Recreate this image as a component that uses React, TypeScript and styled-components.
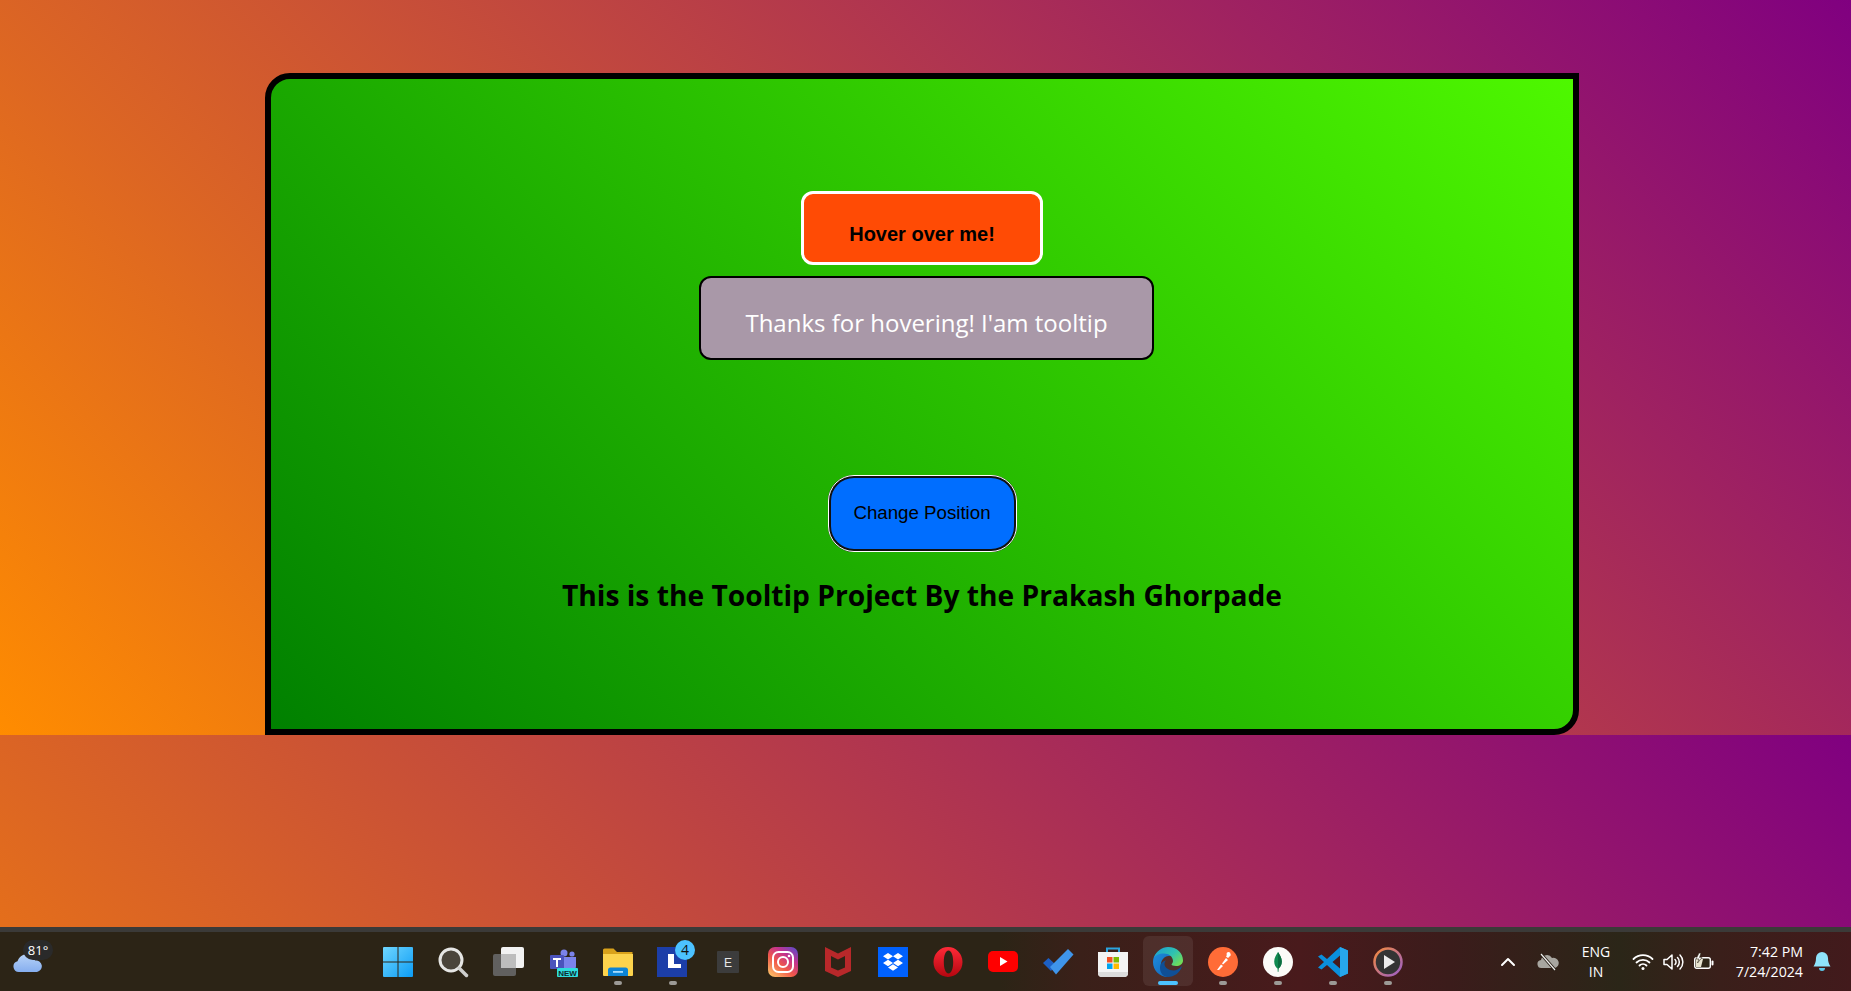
import styled, { createGlobalStyle } from 'styled-components';

const GlobalStyle = createGlobalStyle`
  html,
  body {
    margin: 0;
    height: 991px;
    overflow: hidden;
  }

  body {
    font-family: 'Open Sans', 'Liberation Sans', sans-serif;
    background: linear-gradient(45deg, #ff8c00, #800080) 0 0 / 100% 735px repeat;
  }
`;

const Page = styled.div`
  height: 991px;
  display: flex;
  flex-direction: column;
`;

const Stage = styled.main`
  height: 735px;
  box-sizing: border-box;
  padding: 73px 0 0 265px;
`;

const Card = styled.section`
  width: 1314px;
  height: 662px;
  box-sizing: border-box;
  padding-top: 112px;
  border: 6px solid #000;
  border-radius: 25px 0 25px 0;
  background: linear-gradient(45deg, #008000, #4ef800);
  display: flex;
  flex-direction: column;
  align-items: center;
`;

const HoverButton = styled.button`
  width: 242px;
  height: 74px;
  box-sizing: border-box;
  padding: 13px 0 0;
  border: 3px solid #fff;
  border-radius: 12px;
  background: #ff4b05;
  color: #000;
  font-family: 'Liberation Sans', sans-serif;
  font-size: 20px;
  font-weight: 700;
`;

const Tooltip = styled.div`
  width: 455px;
  height: 84px;
  box-sizing: border-box;
  margin: 11px 0 0 9px;
  padding-top: 9px;
  border: 2px solid #000;
  border-radius: 12px;
  background: #a998a8;
  color: #fff;
  font-size: 24px;
  display: flex;
  align-items: center;
  justify-content: center;
`;

const PositionButton = styled.button`
  width: 189px;
  height: 77px;
  box-sizing: border-box;
  margin-top: 115px;
  padding: 0 0 2px;
  border: 3px solid #111;
  border-radius: 26px;
  outline: 1px solid #fff;
  outline-offset: -1px;
  background: #006eff;
  color: #000;
  font-family: 'Liberation Sans', sans-serif;
  font-size: 18.7px;
`;

const Heading = styled.h1`
  margin: 24px 0 0;
  color: #000;
  font-size: 28.2px;
  font-weight: 700;
  line-height: 38px;
`;

const Taskbar = styled.footer`
  height: 64px;
  margin-top: auto;
  box-sizing: border-box;
  border-top: 5px solid #3b3a38;
  background: linear-gradient(
    90deg,
    #2c2416 0,
    #2c2416 1000px,
    #3a2019 1080px,
    #491a1c 1300px,
    #3b1c1b 1450px,
    #2b2618 1620px,
    #3a1f1a 1720px,
    #421a1c 1851px
  );
  display: grid;
  grid-template-columns: 370px auto 1fr;
  color: #fff;
`;

const Weather = styled.div`
  position: relative;
  height: 59px;
  padding: 20px 0 0 13px;
  box-sizing: border-box;
`;

const WeatherBadge = styled.span`
  position: absolute;
  left: 23px;
  top: 8px;
  width: 30px;
  height: 20px;
  border-radius: 10px;
  background: #2a2a2a;
  font-size: 13px;
  line-height: 20px;
  text-align: center;
`;

const AppRow = styled.nav`
  display: flex;
`;

const AppSlot = styled.div<{ $active?: boolean }>`
  position: relative;
  width: 55px;
  height: 59px;
  display: flex;
  align-items: center;
  justify-content: center;

  ${({ $active }) =>
    $active &&
    `
    &::before {
      content: '';
      position: absolute;
      left: 2.5px;
      top: 4px;
      width: 50px;
      height: 50px;
      border-radius: 6px;
      background: rgba(255, 255, 255, 0.08);
    }
  `}
`;

const RunDot = styled.span<{ $active?: boolean }>`
  position: absolute;
  left: 50%;
  bottom: 6px;
  width: ${({ $active }) => ($active ? '20px' : '8px')};
  height: 4px;
  border-radius: 2px;
  transform: translateX(-50%);
  background: ${({ $active }) => ($active ? '#4cc2ff' : '#9c9a96')};
`;

const AppIcon = styled.svg`
  position: relative;
  width: 32px;
  height: 32px;
  display: block;
`;

const CountBadge = styled.span`
  position: absolute;
  left: 30px;
  top: 8px;
  width: 20px;
  height: 20px;
  border-radius: 50%;
  background: #4cc2ff;
  color: #111;
  font-size: 14px;
  line-height: 20px;
  text-align: center;
`;

const Tray = styled.div`
  display: flex;
  align-items: center;
  padding-left: 75px;
  height: 59px;
`;

const TraySlot = styled.div<{ $width: number; $gap?: number }>`
  width: ${({ $width }) => $width}px;
  margin-left: ${({ $gap }) => $gap ?? 0}px;
  display: flex;
  justify-content: center;
  align-items: center;
`;

const Lang = styled.div`
  width: 52px;
  font-size: 14px;
  line-height: 20px;
  text-align: center;
`;

const Clock = styled.div`
  width: 85px;
  font-size: 14.2px;
  line-height: 20px;
  text-align: right;
  white-space: nowrap;
`;

const ICON_VIEW = '0 0 32 32';

function WindowsIcon() {
  return (
    <AppIcon viewBox={ICON_VIEW}>
      <defs>
        <linearGradient id="win" x1="0" y1="0" x2="1" y2="1">
          <stop offset="0" stopColor="#6fd6ff" />
          <stop offset="1" stopColor="#0c9cf5" />
        </linearGradient>
      </defs>
      <path d="M2 1h13.500v14.500H1V2a1 1 0 0 1 1-1zM16.500 1H30a1 1 0 0 1 1 1v13.500H16.500zM1 16.500h14.500V31H2a1 1 0 0 1-1-1zM16.500 16.500H31V30a1 1 0 0 1-1 1H16.500z" fill="url(#win)" />
    </AppIcon>
  );
}

function SearchIcon() {
  return (
    <AppIcon viewBox={ICON_VIEW}>
      <circle cx="14" cy="14" r="11" fill="#4a443a" stroke="#e6e6e4" strokeWidth="3" />
      <path d="M22 22l7.500 7.500" stroke="#cfcfcd" strokeWidth="3.500" strokeLinecap="round" />
    </AppIcon>
  );
}

function TaskViewIcon() {
  return (
    <AppIcon viewBox={ICON_VIEW}>
      <rect x="9" y="1" width="23" height="21" rx="2" fill="#f2f2f2" />
      <rect x="1" y="8" width="23" height="22" rx="2" fill="#666" fillOpacity="0.92" />
      <rect x="9" y="8" width="15" height="14" fill="#bdbdbd" />
    </AppIcon>
  );
}

function TeamsIcon() {
  return (
    <AppIcon viewBox={ICON_VIEW}>
      <circle cx="17" cy="7" r="3.500" fill="#7b83eb" />
      <circle cx="25" cy="8" r="2.600" fill="#7b83eb" />
      <path d="M15 11h14v9a4 4 0 0 1-4 4h-6a4 4 0 0 1-4-4z" fill="#7b83eb" />
      <rect x="3" y="9" width="14" height="14" rx="1" fill="#4b53bc" />
      <path d="M6 12h8v2h-3v7H9v-7H6z" fill="#fff" />
      <rect x="10" y="22" width="21" height="9" rx="1" fill="#2fdcdc" />
      <text x="20.500" y="29.500" fontFamily="Liberation Sans" fontSize="8" fontWeight="700" textAnchor="middle" fill="#0d2a2e">NEW</text>
    </AppIcon>
  );
}

function FilesIcon() {
  return (
    <AppIcon viewBox={ICON_VIEW}>
      <path d="M1 4a1.500 1.500 0 0 1 1.500-1.500h9L15 6h15.500v4H1z" fill="#d9a21b" />
      <path d="M1 8h30v21a1 1 0 0 1-1 1H2a1 1 0 0 1-1-1z" fill="#fcd34d" />
      <path d="M6 30v-6a2.500 2.500 0 0 1 2.500-2.500h15A2.500 2.500 0 0 1 26 24v6z" fill="#0c84d6" />
      <rect x="11" y="25" width="10" height="1.800" fill="#a5dcff" />
    </AppIcon>
  );
}

function LogoLIcon() {
  return (
    <AppIcon viewBox={ICON_VIEW}>
      <rect width="30" height="30" y="1" fill="#1c3ea8" />
      <path d="M11 8h6v10h7v4H11z" fill="#fff" />
    </AppIcon>
  );
}

function EpicIcon() {
  return (
    <AppIcon viewBox={ICON_VIEW}>
      <rect x="5" y="5" width="22" height="22" rx="1" fill="#3c3c3c" />
      <text x="16" y="21" fontFamily="Liberation Sans" fontSize="12" textAnchor="middle" fill="#e8e8e8">E</text>
    </AppIcon>
  );
}

function InstagramIcon() {
  return (
    <AppIcon viewBox={ICON_VIEW}>
      <defs>
        <linearGradient id="insta" x1="0.1" y1="1" x2="0.9" y2="0">
          <stop offset="0" stopColor="#fdc468" />
          <stop offset="0.4" stopColor="#f0574a" />
          <stop offset="0.7" stopColor="#c2338f" />
          <stop offset="1" stopColor="#5f4bc9" />
        </linearGradient>
      </defs>
      <rect x="1" y="1" width="30" height="30" rx="7" fill="url(#insta)" />
      <rect x="6" y="6" width="20" height="20" rx="5.500" fill="none" stroke="#fff" strokeWidth="2" />
      <circle cx="16" cy="16" r="5" fill="none" stroke="#fff" strokeWidth="2" />
      <circle cx="22" cy="10" r="1.300" fill="#fff" />
    </AppIcon>
  );
}

function McAfeeIcon() {
  return (
    <AppIcon viewBox={ICON_VIEW}>
      <path d="M3 1l13 6.500L29 1v24l-13 6-13-6z" fill="#b8282a" />
      <path d="M9 10l7 3.500 7-3.500v11.500l-7 3-7-3z" fill="#2d2316" />
    </AppIcon>
  );
}

function DropboxIcon() {
  return (
    <AppIcon viewBox={ICON_VIEW}>
      <rect x="1" y="1" width="30" height="30" fill="#0061fe" />
      <path d="M11 7l5 3.200-5 3.200-5-3.200zM21 7l5 3.200-5 3.200-5-3.200zM11 13.800l5 3.200-5 3.200-5-3.200zM21 13.800l5 3.200-5 3.200-5-3.200zM11 21.500l5-3.200 5 3.200-5 3.200z" fill="#fff" />
    </AppIcon>
  );
}

function OperaIcon() {
  return (
    <AppIcon viewBox={ICON_VIEW}>
      <defs>
        <linearGradient id="opera" x1="0" y1="0" x2="0" y2="1">
          <stop offset="0" stopColor="#ff2a38" />
          <stop offset="1" stopColor="#b3060f" />
        </linearGradient>
      </defs>
      <path fillRule="evenodd" d="M16 1a14.500 15 0 1 0 0 30 14.500 15 0 0 0 0-30zm.5 3.500c3 0 4.700 5.200 4.700 11.500s-1.700 11.500-4.700 11.500-4.700-5.200-4.700-11.500S13.500 4.500 16.500 4.500z" fill="url(#opera)" />
    </AppIcon>
  );
}

function YoutubeIcon() {
  return (
    <AppIcon viewBox={ICON_VIEW}>
      <rect x="1" y="5" width="30" height="21" rx="5" fill="#f00" />
      <path d="M13 11l7.500 4.500L13 20z" fill="#fff" />
    </AppIcon>
  );
}

function TodoIcon() {
  return (
    <AppIcon viewBox={ICON_VIEW}>
      <path d="M1 17l5.500-5 7.500 7-5 6z" fill="#1c5fc4" />
      <path d="M8 21L26 3l5.500 5.500L14 28.500z" fill="#3f95ea" />
    </AppIcon>
  );
}

function StoreIcon() {
  return (
    <AppIcon viewBox={ICON_VIEW}>
      <path d="M10 6V2.500h12V6" fill="none" stroke="#2aa5e0" strokeWidth="2" />
      <path d="M1 6h30v21a4 4 0 0 1-4 4H5a4 4 0 0 1-4-4z" fill="#f4f4f4" />
      <path d="M1 26h30v1a4 4 0 0 1-4 4H5a4 4 0 0 1-4-4z" fill="#dcdcdc" />
      <rect x="10" y="11" width="5.500" height="5.500" fill="#f25022" />
      <rect x="16.500" y="11" width="5.500" height="5.500" fill="#7fba00" />
      <rect x="10" y="17.500" width="5.500" height="5.500" fill="#00a4ef" />
      <rect x="16.500" y="17.500" width="5.500" height="5.500" fill="#ffb900" />
    </AppIcon>
  );
}

function EdgeIcon() {
  return (
    <AppIcon viewBox={ICON_VIEW}>
      <defs>
        <linearGradient id="edgeTop" x1="0" y1="0" x2="1" y2="0.7">
          <stop offset="0" stopColor="#1a9bd6" />
          <stop offset="0.6" stopColor="#2fc2b0" />
          <stop offset="1" stopColor="#6fdc5a" />
        </linearGradient>
        <linearGradient id="edgeBase" x1="0" y1="0" x2="0.8" y2="1">
          <stop offset="0" stopColor="#1f8fe0" />
          <stop offset="1" stopColor="#1266b8" />
        </linearGradient>
      </defs>
      <path d="M1 16C1 8 7 4 12 4c5 0 8 3 8 6-7-1-12 4-11 11 .5 5 4 8.500 7 10C7 31 1 24 1 16z" fill="url(#edgeBase)" />
      <path d="M30 20c-2 7-8 11-14 11-4.500 0-8-4-8-9 0-4.500 3-7 6-7.500-1 1-1.500 2-1.500 3.500 0 3.500 4 6.500 9 6.500 3 0 6-2 8.500-4.500z" fill="#0f4f96" />
      <path d="M2 12C4 5 10 1 16 1c9 0 15 6 15 13.500 0 3.500-3 5.500-7 5.500-3 0-4.500-1-4.500-1.500 0-.8 1.500-1.300 1.500-3.500 0-4-4-7.500-9-7.500-5 0-9 2-10 4.500z" fill="url(#edgeTop)" />
    </AppIcon>
  );
}

function PostmanIcon() {
  return (
    <AppIcon viewBox={ICON_VIEW}>
      <circle cx="16" cy="16" r="15" fill="#ff6c37" />
      <path d="M21.500 6.500l2.500 2.500-3 3-2-1.500zM19 12l-4 5.500 1 1L21 14zM14 18.500L10 24h2l4-4z" fill="#fff" />
      <circle cx="21.500" cy="8" r="2" fill="#fff" />
    </AppIcon>
  );
}

function MongoIcon() {
  return (
    <AppIcon viewBox={ICON_VIEW}>
      <circle cx="16" cy="16" r="15" fill="#fbfbf8" />
      <path d="M16 6c1.500 2.500 3.800 5.500 3.800 9.500 0 3.500-1.800 6-3.300 7l-.3 3.500h-.4l-.3-3.500c-1.500-1-3.300-3.500-3.300-7C12.200 11.500 14.500 8.500 16 6z" fill="#0f8a50" />
      <path d="M16 6v20h.2l.3-3.500c1.500-1 3.300-3.500 3.300-7C19.800 11.500 17.500 8.500 16 6z" fill="#0b6d40" />
    </AppIcon>
  );
}

function VscodeIcon() {
  return (
    <AppIcon viewBox={ICON_VIEW}>
      <path d="M23 1l8 3.500v23L23 31 10 19l-5.500 4.500L1 21.500l6-5.500-6-5.500 3.500-2L10 13zM23 9.500L15.500 16l7.500 6.500z" fill="#0a8fdc" />
      <path d="M23 1l8 3.500v23L23 31z" fill="#27a7ec" />
    </AppIcon>
  );
}

function PlayerIcon() {
  return (
    <AppIcon viewBox={ICON_VIEW}>
      <defs>
        <linearGradient id="player" x1="0" y1="0" x2="1" y2="1">
          <stop offset="0" stopColor="#f58a3c" />
          <stop offset="1" stopColor="#9a5fc8" />
        </linearGradient>
      </defs>
      <circle cx="16" cy="16" r="13.500" fill="#343434" stroke="url(#player)" strokeWidth="2.500" />
      <path d="M12 9l11 7-11 7z" fill="#ececec" />
    </AppIcon>
  );
}

const apps = [
  { key: 'windows', Icon: WindowsIcon },
  { key: 'search', Icon: SearchIcon },
  { key: 'taskview', Icon: TaskViewIcon },
  { key: 'teams', Icon: TeamsIcon },
  { key: 'files', Icon: FilesIcon, running: true },
  { key: 'logol', Icon: LogoLIcon, running: true, count: 4 },
  { key: 'epic', Icon: EpicIcon },
  { key: 'instagram', Icon: InstagramIcon },
  { key: 'mcafee', Icon: McAfeeIcon },
  { key: 'dropbox', Icon: DropboxIcon },
  { key: 'opera', Icon: OperaIcon },
  { key: 'youtube', Icon: YoutubeIcon },
  { key: 'todo', Icon: TodoIcon },
  { key: 'store', Icon: StoreIcon },
  { key: 'edge', Icon: EdgeIcon, running: true, active: true },
  { key: 'postman', Icon: PostmanIcon, running: true },
  { key: 'mongo', Icon: MongoIcon, running: true },
  { key: 'vscode', Icon: VscodeIcon, running: true },
  { key: 'player', Icon: PlayerIcon, running: true },
];

function App() {
  return (
    <>
      <GlobalStyle />
      <Page>
        <Stage>
          <Card>
            <HoverButton>Hover over me!</HoverButton>
            <Tooltip>Thanks for hovering! I'am tooltip</Tooltip>
            <PositionButton>Change Position</PositionButton>
            <Heading>This is the Tooltip Project By the Prakash Ghorpade</Heading>
          </Card>
        </Stage>
        <Taskbar>
          <Weather>
            <svg width="30" height="20" viewBox="0 0 30 20">
              <defs>
                <linearGradient id="cloud" x1="0" y1="0" x2="0" y2="1">
                  <stop offset="0" stopColor="#b7d3f8" />
                  <stop offset="1" stopColor="#86aeef" />
                </linearGradient>
              </defs>
              <path d="M6 20a5.500 5.500 0 0 1-1.500-10.800C6 5 10 2 14 2c4 0 7 3 8 6.500a5.800 5.800 0 0 1 2 11.500z" fill="url(#cloud)" />
            </svg>
            <WeatherBadge>81°</WeatherBadge>
          </Weather>
          <AppRow>
            {apps.map(({ key, Icon, running, active, count }) => (
              <AppSlot key={key} $active={active}>
                <Icon />
                {count && <CountBadge>{count}</CountBadge>}
                {running && <RunDot $active={active} />}
              </AppSlot>
            ))}
          </AppRow>
          <Tray>
            <TraySlot $width={36}>
              <svg width="16" height="10" viewBox="0 0 16 10">
                <path d="M2 8l6-6 6 6" fill="none" stroke="#fff" strokeWidth="2" strokeLinecap="round" strokeLinejoin="round" />
              </svg>
            </TraySlot>
            <TraySlot $width={44}>
              <svg width="22" height="18" viewBox="0 0 22 18">
                <path d="M5 15a4 4 0 0 1-1-8 6 6 0 0 1 11-2 4.500 4.500 0 0 1 3 10z" fill="#a8a6a0" />
                <path d="M4 1l14 16" stroke="#2a2016" strokeWidth="3" />
                <path d="M4 1l14 16" stroke="#f2f2f2" strokeWidth="1.200" />
              </svg>
            </TraySlot>
            <Lang>
              ENG
              <br />
              IN
            </Lang>
            <TraySlot $width={30} $gap={6}>
              <svg width="22" height="18" viewBox="0 0 22 18" fill="none" stroke="#fff" strokeWidth="1.800" strokeLinecap="round">
                <path d="M1.500 6a13.500 13.500 0 0 1 19 0" />
                <path d="M4.500 9.500a9.500 9.500 0 0 1 13 0" />
                <path d="M7.500 12.500a5 5 0 0 1 7 0" />
                <circle cx="11" cy="15.500" r="1.500" fill="#fff" stroke="none" />
              </svg>
            </TraySlot>
            <TraySlot $width={30}>
              <svg width="21" height="18" viewBox="0 0 21 18" fill="none" stroke="#fff" strokeWidth="1.500" strokeLinecap="round" strokeLinejoin="round">
                <path d="M1 6.500v5h3l5 4.500V2L4 6.500z" />
                <path d="M12 6.500a3.500 3.500 0 0 1 0 5" />
                <path d="M14.500 4.500a6.500 6.500 0 0 1 0 9" />
                <path d="M17 2a10 10 0 0 1 0 14" />
              </svg>
            </TraySlot>
            <TraySlot $width={30}>
              <svg width="21" height="17" viewBox="0 0 21 17">
                <rect x="1.700" y="4.700" width="15.600" height="10.600" rx="2" fill="#2e2618" stroke="#fff" strokeWidth="1.400" />
                <path d="M3 6h7l-2 8H3z" fill="#e8e4d0" />
                <rect x="18.500" y="7.500" width="2" height="5" rx="1" fill="#fff" />
                <path d="M6 0L3 6h3L4.500 10 9 4.500H6.500L8 0z" fill="#fff" stroke="#2e2618" strokeWidth="0.600" />
              </svg>
            </TraySlot>
            <Clock>
              7:42 PM
              <br />
              7/24/2024
            </Clock>
            <TraySlot $width={38}>
              <svg width="18" height="21" viewBox="0 0 18 21">
                <path d="M9 1a6 6 0 0 1 6 6c0 4 1 6 2.500 8.500H.5C2 13 3 11 3 7a6 6 0 0 1 6-6z" fill="#8fe3fb" />
                <path d="M6 17h6a3 3 0 0 1-6 0z" fill="#5cc7e8" />
              </svg>
            </TraySlot>
          </Tray>
        </Taskbar>
      </Page>
    </>
  );
}

export default App;
